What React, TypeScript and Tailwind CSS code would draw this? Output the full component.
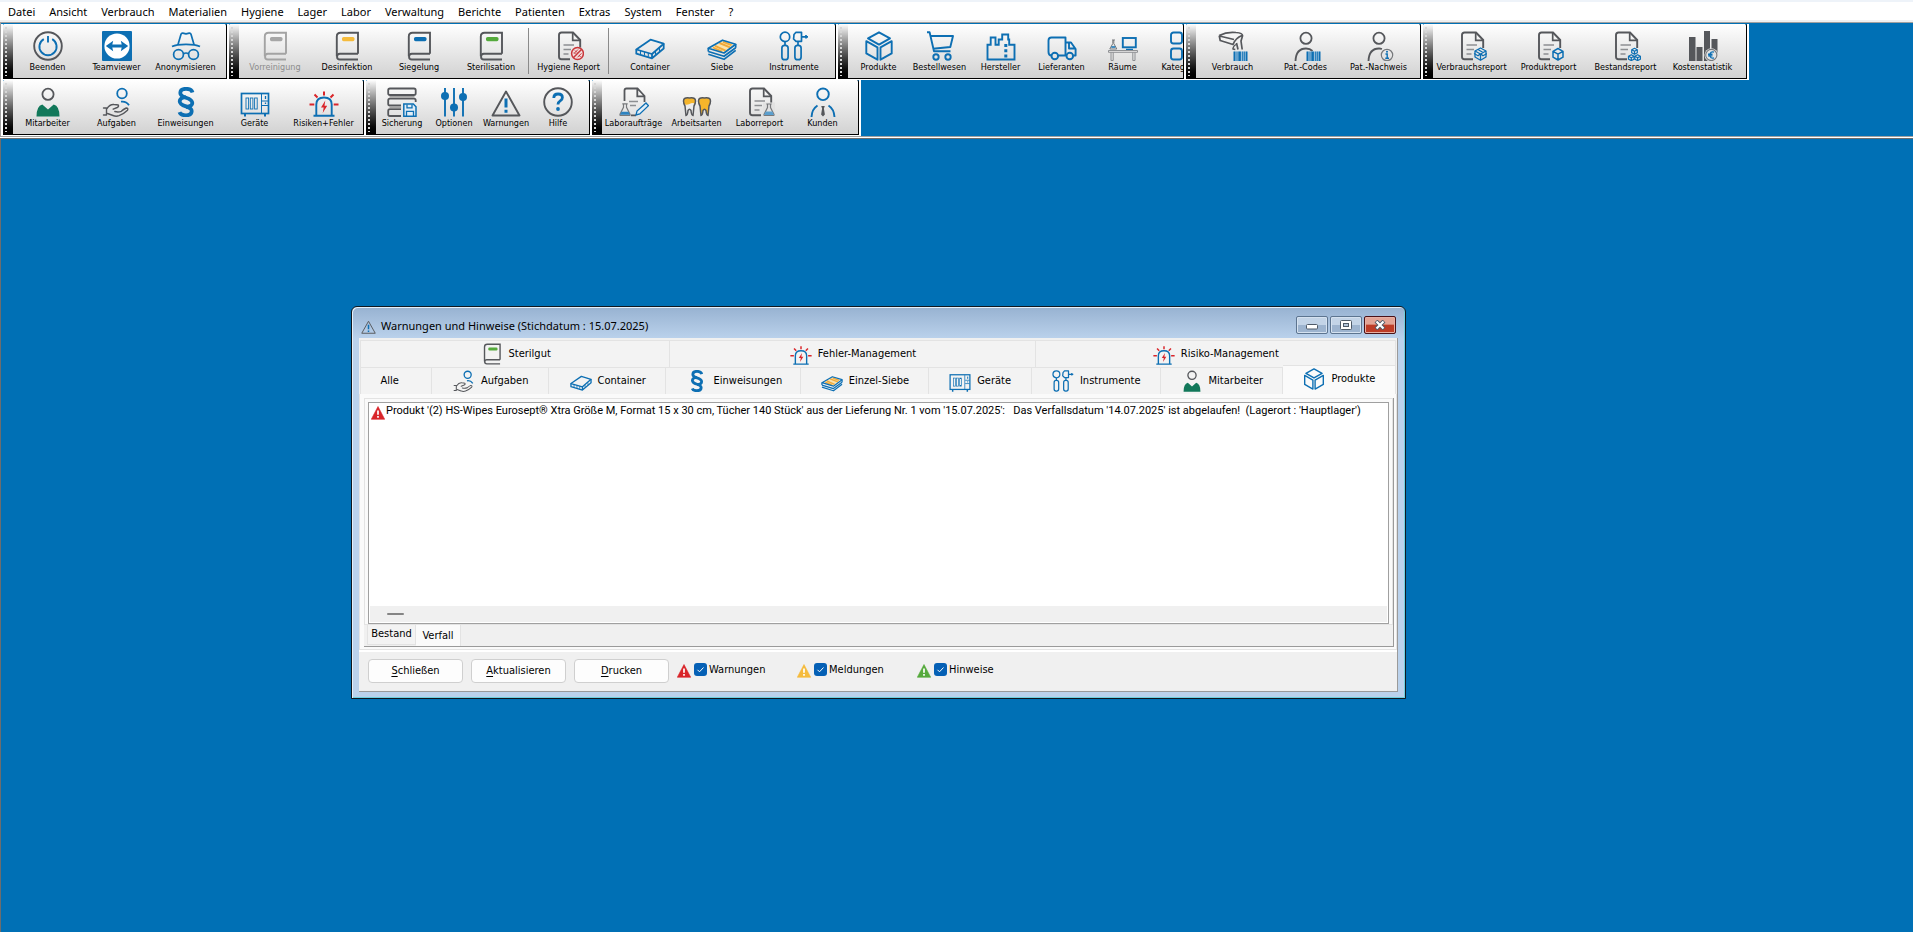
import React from "react";

const B = "#0d6fb3";
const D = "#55575b";

type IconProps = { className?: string };
type IconType = (p: IconProps) => React.ReactElement;

function Svg({ className = "size-[30px]", children }: { className?: string; children: React.ReactNode }) {
  return (
    <svg viewBox="0 0 30 30" fill="none" className={`${className} shrink-0`} aria-hidden="true">
      {children}
    </svg>
  );
}

const Power: IconType = (p) => (
  <Svg {...p}>
    <circle cx="15" cy="15" r="13.8" stroke={D} strokeWidth="1.9" />
    <path d="M10.800 8.200a8.600 8.600 0 1 0 8.400 0" stroke={B} strokeWidth="1.900" />
    <path d="M15 5v6.500" stroke={B} strokeWidth="1.900" />
  </Svg>
);

const TeamViewer: IconType = (p) => (
  <Svg {...p}>
    <rect width="30" height="30" rx="1" fill={B} />
    <circle cx="15" cy="15" r="12.600" fill="#fff" />
    <path d="M3.800 15l7.400-5.200-.9 3.600h9.400l-.9-3.600 7.400 5.200-7.400 5.200.9-3.600h-9.400l.9 3.600z" fill={B} />
  </Svg>
);

const Incognito: IconType = (p) => (
  <Svg {...p}>
    <g stroke={B} strokeWidth="1.700" strokeLinejoin="round">
      <path d="M7 13.500l3-10.200q.4-1.300 1.800-1.100l3.200.6 3.200-.6q1.400-.2 1.800 1.100l3 10.200" />
      <path d="M1 15.600q4.500-2.200 14-2.200t14 2.200" />
      <circle cx="7.500" cy="23.500" r="4.900" />
      <circle cx="22.500" cy="23.500" r="4.900" />
      <path d="M12.400 22.800q2.600-1.600 5.200 0" />
    </g>
  </Svg>
);

function bookIcon(fill: string, stroke: string): IconType {
  return (p) => (
    <Svg {...p}>
      <path d="M26 22.800V1.700H8.600Q4.800 1.700 4.800 5.400V25.200" stroke={stroke} strokeWidth="1.900" />
      <path d="M26 22.800H7.900a2.800 2.800 0 0 0 0 5.700H26" stroke={stroke} strokeWidth="1.900" />
      <rect x="10" y="6" width="12.500" height="4.200" rx="1.600" fill={fill} />
    </Svg>
  );
}
const BookGrey = bookIcon("#a6a6a6", "#a3a3a3");
const BookYellow = bookIcon("#f5bb3c", D);
const BookBlue = bookIcon(B, D);
const BookGreen = bookIcon("#55aa3c", D);

function Sheet() {
  return (
    <>
      <path d="M16 28.300H7.500Q5 28.300 5 25.800V4Q5 1.500 7.500 1.500H19L26.200 9V17" stroke={D} strokeWidth="1.900" />
      <path d="M18.700 2V9.300H26" stroke={D} strokeWidth="1.700" />
      <path d="M9.500 14h10.500M9.500 18.500h7.500M9.500 23h5" stroke="#8d8f92" strokeWidth="1.300" />
    </>
  );
}

const HygieneReport: IconType = (p) => (
  <Svg {...p}>
    <Sheet />
    <circle cx="23.500" cy="22.500" r="6.800" fill="#f3dede" />
    <circle cx="23.500" cy="22.500" r="5.900" stroke="#c8373b" strokeWidth="1.500" />
    <path d="M19.300 26.700l8.400-8.400" stroke="#c8373b" strokeWidth="1.500" />
    <path d="M20 22.500l4-4M23.500 26.300l4-4M21 19.500l2 2M25 24l1.500 2M20 21.500l1.500 1.500" stroke="#c8373b" strokeWidth="1" />
  </Svg>
);

const Container: IconType = (p) => (
  <Svg {...p}>
    <g stroke={B} strokeWidth="1.800" strokeLinejoin="round">
      <path d="M1.300 18.500L15.500 8.700l13.200 4L17 23z" />
      <path d="M1.300 18.500v4.200L17 27.300 28.700 17.500v-4.800M17 23v4.300" />
      <path d="M5.500 20v3.500M9.500 21v3.500M13.300 22v3.700M20.500 20.200v3.500M24.500 17v3.500" strokeWidth="1.100" />
    </g>
  </Svg>
);

const Siebe: IconType = (p) => (
  <Svg {...p}>
    <path d="M4.500 16.800L15.600 10l11 3.500L16.500 21.300z" fill="#fbe3ad" />
    <path d="M8 14.800l10.500 4.800M12.500 12l10.500 4.300M6 16.500l9 4M16 10.800l8.500 3.400" stroke="#f0a93a" strokeWidth="1.900" />
    <g stroke={B} strokeWidth="1.700" strokeLinejoin="round">
      <path d="M1.300 17.300L15.500 9.200l13.200 4L17 22z" />
      <path d="M1.300 20.500L17 25.300l11.700-8.600M1.300 23.300L17 28.300l11.700-9M1.300 17.300v3.200M28.700 13.200v3.500" />
    </g>
  </Svg>
);

const Instruments: IconType = (p) => (
  <Svg {...p}>
    <g stroke={B} strokeWidth="1.700" strokeLinejoin="round">
      <circle cx="6" cy="5.900" r="4.700" />
      <path d="M6 10.600v4M19 10.600v4" />
      <rect x="2.900" y="14.300" width="6.200" height="14.400" rx="2.800" />
      <rect x="15.900" y="14.300" width="6.200" height="14.400" rx="2.800" />
      <path d="M15 3.500L17 1.300h5.500v9H17L14.600 8z" />
      <path d="M22.500 5.800H29M27 4v3.500" />
    </g>
  </Svg>
);

const Cube: IconType = (p) => (
  <Svg {...p}>
    <g stroke={B} strokeWidth="1.900" strokeLinejoin="round">
      <path d="M15 1.300L26 7.400 15 13.600 4 7.400z" />
      <path d="M2.300 10.200L13.500 16.400v12.300L2.300 22.400z" />
      <path d="M27.700 10.200L16.500 16.400v12.300l11.200-6.300z" />
    </g>
  </Svg>
);

const Cart: IconType = (p) => (
  <Svg {...p}>
    <g stroke={B} strokeWidth="1.900" strokeLinejoin="round">
      <path d="M2 1.300h2.600L9 20.300h16.500M5.500 5H28l-2.700 11L8 17.800" />
      <circle cx="11" cy="26" r="2.700" />
      <circle cx="23" cy="26" r="2.700" />
    </g>
  </Svg>
);

const Factory: IconType = (p) => (
  <Svg {...p}>
    <path d="M1.500 28.500V13.700h3.200V6.500h4.800v7.200h3.200V8.500h3.500V3.500h6v5h1v5.200h5.300v14.800z" stroke={B} strokeWidth="1.900" />
    <path d="M19.800 13v3M19.800 18.300v3M19.800 23.500v3" stroke={B} strokeWidth="3" />
  </Svg>
);

const Truck: IconType = (p) => (
  <Svg {...p}>
    <g stroke={B} strokeWidth="1.900" strokeLinejoin="round">
      <path d="M4.500 24.500Q1.500 24.500 1.500 21V9.500Q1.500 6.500 4.500 6.500h14v18H11" />
      <path d="M18.500 11.500h5.500l4.600 6.500v6.500h-2.200M22 12v5.500h6.500" />
      <circle cx="7.800" cy="25" r="3.300" />
      <circle cx="22.800" cy="25" r="3.300" />
    </g>
  </Svg>
);

const Room: IconType = (p) => (
  <Svg {...p}>
    <rect x="14.800" y="7" width="13" height="9.300" stroke={B} strokeWidth="1.900" />
    <path d="M18 18.300h7" stroke={B} strokeWidth="1.200" />
    <path d="M.5 19.500h29v1.800H.5zM3 21.500v8h2.200v-8M24.800 21.500v8H27v-8" stroke="#85878a" strokeWidth=".9" />
    <path d="M4.800 9.500v3L1.800 18h7l-3-5.500v-3zM4 9h3" stroke="#77797c" strokeWidth="1" />
    <path d="M3.300 16h4" stroke={B} strokeWidth="1.500" />
  </Svg>
);

const Categories: IconType = (p) => (
  <Svg {...p}>
    <g stroke={B} strokeWidth="1.900">
      <rect x="2" y="1.500" width="11" height="11" rx="2.500" />
      <rect x="2" y="17.500" width="11" height="11" rx="2.500" />
      <rect x="18" y="1.500" width="11" height="11" rx="2.500" />
      <rect x="18" y="17.500" width="11" height="11" rx="2.500" />
    </g>
  </Svg>
);

function Barcode() {
  return (
    <g fill={B}>
      <rect x="16" y="20.500" width="13" height="9.500" fill="#b9d3e6" />
      <rect x="15.500" y="20.500" width="2" height="9.500" />
      <rect x="18.500" y="20.500" width="1" height="9.500" />
      <rect x="20.300" y="20.500" width="2.600" height="9.500" />
      <rect x="23.800" y="20.500" width="1" height="9.500" />
      <rect x="25.600" y="20.500" width="1.200" height="9.500" />
      <rect x="27.600" y="20.500" width="1.900" height="9.500" />
    </g>
  );
}

const Scanner: IconType = (p) => (
  <Svg {...p}>
    <g stroke={D} strokeWidth="1.700" strokeLinejoin="round">
      <path d="M1.200 4.500Q9 .5 18 1.500q7 .5 6.500 3.500l-1.500 5 1.200 8.500M1.200 4.500l1 5L15 13.500q2.500-6.500 9-9M1.500 5L16 8.500M18.500 12l1.500 6.500" />
      <path d="M18 13.500q-2.500 1-3.200 4.500l2.500.5" strokeWidth="1.300" />
    </g>
    <Barcode />
  </Svg>
);

const PatCodes: IconType = (p) => (
  <Svg {...p}>
    <circle cx="15" cy="7.300" r="5.600" stroke={D} strokeWidth="1.800" />
    <path d="M4.500 30Q5 17.500 15 17.500q4 0 6.500 2.500" stroke={D} strokeWidth="1.800" />
    <Barcode />
  </Svg>
);

const PatNachweis: IconType = (p) => (
  <Svg {...p}>
    <circle cx="15" cy="7.300" r="5.600" stroke={D} strokeWidth="1.800" />
    <path d="M4.500 30Q5 17.500 15 17.500q1.500 0 3 .5" stroke={D} strokeWidth="1.800" />
    <circle cx="23" cy="24" r="5.700" stroke="#77797c" strokeWidth="1.200" />
    <path d="M21.500 23H23.200v4M21.300 27.200h3.700" stroke={B} strokeWidth="1.400" />
    <circle cx="23" cy="20.700" r="1" fill={B} />
  </Svg>
);

const ConsumptionReport: IconType = (p) => (
  <Svg {...p}>
    <Sheet />
    <g stroke={B} strokeWidth="1.300" strokeLinejoin="round">
      <path d="M23.500 17l5.500 3v6l-5.500 3.300-5.500-3.300v-6z" />
      <path d="M18 20l5.500 3 5.500-3M23.500 23v6M17 22.500l4 2.300 2.500-2 2.500 2 4-2.300M21 18.500l5 3" />
    </g>
  </Svg>
);

const ProductReport: IconType = (p) => (
  <Svg {...p}>
    <Sheet />
    <path d="M24 17.500l5 2.800v5.900L24 29l-5-2.800v-5.900zM19 20.300l5 2.800 5-2.800M24 23.100V29" stroke={B} strokeWidth="1.500" strokeLinejoin="round" />
  </Svg>
);

const StockReport: IconType = (p) => (
  <Svg {...p}>
    <Sheet />
    <g stroke={B} strokeWidth="1.200" strokeLinejoin="round">
      <path d="M23.500 17.300l2.800 1.500v3l-2.800 1.500-2.800-1.500v-3zM20.700 18.800l2.800 1.500 2.800-1.500M23.500 20.300v3" />
      <path d="M20.300 23.700l2.800 1.500v3l-2.800 1.400-2.800-1.400v-3zM17.500 25.200l2.800 1.500 2.800-1.500M20.300 26.700v3" />
      <path d="M26.600 23.700l2.800 1.500v3l-2.800 1.400-2.800-1.400v-3zM23.800 25.200l2.800 1.500 2.800-1.500M26.600 26.700v3" />
    </g>
  </Svg>
);

const CostStats: IconType = (p) => (
  <Svg {...p}>
    <path d="M1 6h6.500v24H1zM8.500 16h6v14h-6zM16 0h6v30h-6zM23.500 8H29.500v16h-6z" fill={D} />
    <circle cx="23.300" cy="24" r="6.800" fill="#e4e4e4" />
    <circle cx="23.300" cy="24" r="5.600" stroke="#77797c" strokeWidth="1.100" />
    <path d="M26 21.200q-3.600-1.300-4.200 2.800.6 4.100 4.200 2.800M20 23.300h4.500M20 24.900h4.500" stroke={B} strokeWidth="1.400" />
  </Svg>
);

const Person: IconType = (p) => (
  <Svg {...p}>
    <circle cx="15" cy="7.300" r="5.600" stroke={D} strokeWidth="1.800" />
    <path d="M3.500 29.500Q3.500 19 9.300 17.500L15 22.500l5.700-5Q26.500 19 26.500 29.500z" fill="#12785a" />
  </Svg>
);

const Tasks: IconType = (p) => (
  <Svg {...p}>
    <circle cx="20" cy="6.500" r="4.800" stroke={B} strokeWidth="1.800" />
    <path d="M19 14.700q5-.8 8 3.600" stroke={B} strokeWidth="1.800" />
    <g stroke={D} strokeWidth="1.400" strokeLinejoin="round" strokeLinecap="round">
      <path d="M1.500 21h3v7h-3M5 21.500q3-4.500 7-4 3 .3 4.200.5 1 1.500-1 2.500l-4 1.700" />
      <path d="M5.500 26.500l5.500 2q3 1.300 6 .2 5-2 8.500-5.500 1-2-1.200-2.200-3 1.500-5 3.300-3 1.200-6.500.2" />
    </g>
  </Svg>
);

const Paragraph: IconType = (p) => (
  <Svg {...p}>
    <g stroke={B} strokeWidth="3.800">
      <path d="M21.500 5.500Q20.500 1.800 15 1.800 9.300 1.800 9.300 6q0 3 5.700 4.700 6.300 2 6.300 5.300 0 3.300-6.300 4" />
      <path d="M8.500 25.200Q9.500 28.300 15 28.300q5.700 0 5.700-4.300 0-2.800-5.700-4.600-6.300-2-6.300-5.200 0-3.200 6.300-4" />
    </g>
  </Svg>
);

const Device: IconType = (p) => (
  <Svg {...p}>
    <g stroke={B}>
      <rect x="1.500" y="6.500" width="27" height="20" strokeWidth="1.700" />
      <path d="M5 27v2.500M25 27v2.500" strokeWidth="2" />
      <path d="M21.500 7v19M22 14h6M22 18.500h6" strokeWidth="1" />
      <rect x="6" y="11" width="2.600" height="11" strokeWidth=".9" />
      <rect x="10.300" y="11" width="2.600" height="11" strokeWidth=".9" />
      <rect x="14.600" y="11" width="2.600" height="11" strokeWidth=".9" />
      <path d="M25.500 9v3M25.500 15.500v1.500" strokeWidth="1.300" />
    </g>
  </Svg>
);

const Alarm: IconType = (p) => (
  <Svg {...p}>
    <path d="M7.300 28V17.500Q7.300 10.500 15 10.500t7.700 7V28M4.500 28.800h21" stroke={B} strokeWidth="1.900" />
    <path d="M16.300 13.500l-4.300 7h2.700l-1 5.500 4.500-7.300h-2.700z" fill="#d9252a" />
    <path d="M15 4.500v4M5.500 7.500l3 3M24.500 7.500l-3 3M.5 17.500h4.800M24.700 17.500h4.800" stroke="#d9252a" strokeWidth="2" />
  </Svg>
);

const Backup: IconType = (p) => (
  <Svg {...p}>
    <g stroke={D} strokeWidth="1.800">
      <rect x="1.200" y="1.500" width="27.500" height="6.500" rx="1.800" />
      <path d="M14 18.500H3Q1.200 18.500 1.200 16.700V13.500Q1.200 11.700 3 11.700H27q1.700 0 1.700 1.800V15" />
      <path d="M14 29H3Q1.200 29 1.200 27.200V24Q1.200 22.200 3 22.200h11" />
    </g>
    <path d="M2.500 9.800h25M2.500 20.300h11.500" stroke="#a3a3a3" strokeWidth="1.700" />
    <path d="M16.800 17h9.500l2.700 2.700v9.500H16.800z" fill="#e2eef7" stroke={B} strokeWidth="1.500" />
    <path d="M20 17.500v3.300h5v-3.300M19.500 29v-4.700h7V29" stroke={B} strokeWidth="1.300" />
  </Svg>
);

const Sliders: IconType = (p) => (
  <Svg {...p}>
    <path d="M6 1v28.500M15 1v28.500M24 1v28.500" stroke={B} strokeWidth="1.900" />
    <g fill={B}>
      <circle cx="6" cy="9" r="4" />
      <circle cx="15" cy="20.500" r="4" />
      <circle cx="24" cy="10" r="4" />
    </g>
  </Svg>
);

const WarnOutline: IconType = (p) => (
  <Svg {...p}>
    <path d="M15 4.500L28.500 28.500h-27z" stroke={D} strokeWidth="1.900" strokeLinejoin="round" />
    <path d="M15 11.500v9M15 22.800v3" stroke={B} strokeWidth="3" />
  </Svg>
);

const Help: IconType = (p) => (
  <Svg {...p}>
    <circle cx="15" cy="15" r="13.800" stroke={D} strokeWidth="1.900" />
    <path d="M10.800 11q0-4 4.300-4 4.300 0 4.300 3.500 0 2-2.200 3.400-2.200 1.400-2.200 3.600" stroke={B} strokeWidth="2.800" />
    <circle cx="15" cy="22" r="1.900" fill={B} />
  </Svg>
);

const flask = "M-1.500-6v3.500L-5 4.500Q-5.300 5.500-4.300 5.500H4.300Q5.300 5.500 5 4.500L1.500-2.500V-6M-2.700-6h5.400";

const LabOrder: IconType = (p) => (
  <Svg {...p}>
    <path d="M5.500 14V3.500Q5.500 1.500 7.500 1.500H18.500L25.500 9v6M18.300 2v7.300h7M12 28.300h5" stroke={D} strokeWidth="1.800" />
    <path d="M10 14.500h9M11 18.500h6" stroke="#8d8f92" strokeWidth="1.300" />
    <g transform="translate(6 22.800)">
      <path d={flask} stroke="#77797c" strokeWidth="1.200" />
      <path d="M-3.500 2h7L5 5H-5z" fill="#2d83c0" />
    </g>
    <path d="M17 28l1-4L27 16l2.500 2.700-8.700 8.300z" fill="#e2eef7" stroke={B} strokeWidth="1.300" />
  </Svg>
);

const LabReport: IconType = (p) => (
  <Svg {...p}>
    <Sheet />
    <rect x="18" y="15.500" width="12" height="14" fill="#e2e2e2" />
    <g transform="translate(24 23)">
      <path d={flask} stroke="#77797c" strokeWidth="1.200" />
      <path d="M-3.300 1.500h6.600L5 5H-5z" fill="#5b9fce" />
    </g>
  </Svg>
);

const Teeth: IconType = (p) => {
  const tooth = "M1.500 14q0-4 6-3 6-1 6 3 0 2.500-1.500 5L11 28.500q-1.500 0-2-5-1.500-2.500-3 0-.5 5-2 5L3 19Q1.500 16.500 1.500 14z";
  return (
    <Svg {...p}>
      <path d={tooth} fill="#ececec" />
      <path d="M1.500 17v-3q0-4 6-3 6-1 6 3v3q-3-2-6 0-3 1.500-6 0z" fill="#f5b52b" />
      <path d={tooth} stroke={D} strokeWidth="1.500" />
      <g transform="translate(15 0)">
        <path d={tooth} fill="#f5b52b" stroke={D} strokeWidth="1.500" />
      </g>
    </Svg>
  );
};

const Customer: IconType = (p) => (
  <Svg {...p}>
    <circle cx="15" cy="7.300" r="5.800" stroke={B} strokeWidth="1.900" />
    <path d="M3.500 30q.5-8 6-11.500M26.500 30q-.5-8-6-11.500" stroke={B} strokeWidth="1.900" />
    <path d="M13.200 19h3.600l-.9 2.500 1 6L15 29.500l-1.900-2 1-6z" fill={D} />
  </Svg>
);

function AlertTriangle({ className }: { className: string }) {
  return (
    <svg viewBox="0 0 14 14" className={`size-[14px] shrink-0 ${className}`} aria-hidden="true">
      <path d="M7 .5L13.700 13.300H.3z" fill="currentColor" stroke="currentColor" strokeWidth=".6" strokeLinejoin="round" />
      <path d="M7 4.500v4.300M7 10v1.800" stroke="#fff" strokeWidth="1.700" />
    </svg>
  );
}

type Tool = { label: string; icon: IconType; off?: boolean };

function ToolButton({ label, icon: Icon, off, width }: Tool & { width: string }) {
  return (
    <button
      type="button"
      disabled={off}
      className={`flex shrink-0 flex-col items-center pt-[7px] ${width} ${off ? "text-[#8c8c8c]" : "text-black"}`}
    >
      <Icon />
      <span className="text-[9px] leading-[13px] whitespace-nowrap">{label}</span>
    </button>
  );
}

function Divider() {
  return <div className="my-1 w-px shrink-0 bg-[#8a8a8a]" />;
}

function Toolbar({ name, className = "pr-[5px]", children }: { name: string; className?: string; children: React.ReactNode }) {
  return (
    <div className="shrink-0 border-r-2 border-b border-white">
      <div
        role="toolbar"
        aria-label={name}
        className={`flex h-[55px] overflow-hidden rounded-t-xs border-r border-b border-black bg-linear-to-b from-white to-[#d2d2d2] ${className}`}
      >
        <div className="flex w-[10px] shrink-0 bg-linear-to-b from-white to-black pt-[3px] pb-[2px] pl-[2px]">
          <div className="w-[2px] bg-[repeating-linear-gradient(to_bottom,#d6d6d6_0_2px,transparent_2px_4px)]" />
        </div>
        {children}
      </div>
    </div>
  );
}

function Tools({ items, width }: { items: Tool[]; width: string }) {
  return (
    <>
      {items.map((t) => (
        <ToolButton key={t.label} {...t} width={width} />
      ))}
    </>
  );
}

const menu = [
  "Datei", "Ansicht", "Verbrauch", "Materialien", "Hygiene", "Lager", "Labor", "Verwaltung",
  "Berichte", "Patienten", "Extras", "System", "Fenster", "?",
];

const upperTabs = [
  { label: "Sterilgut", icon: BookGreen, width: "basis-[309px]" },
  { label: "Fehler-Management", icon: Alarm, width: "basis-[365px]" },
  { label: "Risiko-Management", icon: Alarm, width: "basis-[360px]" },
];

const lowerTabs: { label: string; icon?: IconType; width: string }[] = [
  { label: "Alle", width: "basis-[71px] pr-[14px]" },
  { label: "Aufgaben", icon: Tasks, width: "basis-[117px]" },
  { label: "Container", icon: Container, width: "basis-[117px]" },
  { label: "Einweisungen", icon: Paragraph, width: "basis-[135px]" },
  { label: "Einzel-Siebe", icon: Siebe, width: "basis-[127px]" },
  { label: "Geräte", icon: Device, width: "basis-[103px]" },
  { label: "Instrumente", icon: Instruments, width: "basis-[129px]" },
  { label: "Mitarbeiter", icon: Person, width: "basis-[122px]" },
  { label: "Produkte", icon: Cube, width: "basis-[113px]" },
];

const filters = [
  { id: "warnungen", label: "Warnungen", color: "text-[#d9252a]" },
  { id: "meldungen", label: "Meldungen", color: "text-[#f5bb3c]" },
  { id: "hinweise", label: "Hinweise", color: "text-[#55aa3c]" },
];

function CommandButton({ letter, rest }: { letter: string; rest: string }) {
  return (
    <button
      type="button"
      className="h-6 w-[95px] rounded-[4px] border border-[#cfcfcf] bg-[#fdfdfd] text-[11px] leading-[20px]"
    >
      <u className="underline-offset-2">{letter}</u>
      {rest}
    </button>
  );
}

const captionButton =
  "flex h-[18px] w-8 items-center justify-center rounded-[2px] border border-[#5d7590] bg-linear-to-b from-[#c3d4e7] from-50% to-[#9db4cf] to-50% shadow-[inset_0_0_0_1px_#d5e2f0]";

function WarningsWindow() {
  return (
    <section
      aria-label="Warnungen und Hinweise"
      className="absolute top-[167px] left-[350px] flex w-[1055px] flex-col rounded-t-[6px] border border-[#101820] bg-linear-to-b from-[#97b2d1] to-[#bbd2ec] to-[32px] px-[7px] pb-[6px] shadow-[inset_1px_1px_0_#e6f0fa,inset_-1px_-1px_0_#6fd0e0]"
    >
      <header className="flex h-[31px] items-center pt-[7px] pl-[2px]">
        <WarnOutline className="size-[15px]" />
        <h1 className="flex-1 pl-[5px] text-[11px] leading-4 font-normal font-['Noto_Sans','Open_Sans',sans-serif]">
          Warnungen und Hinweise (Stichdatum : 15.07.2025)
        </h1>
        <div className="flex gap-[2px] pr-[2px] pb-[3px]">
          <button type="button" aria-label="Minimieren" className={captionButton}>
            <svg viewBox="0 0 12 6" className="mt-1 h-[6px] w-3">
              <rect x=".5" y=".5" width="11" height="4.500" rx="1" fill="#fff" stroke="#4e5a68" />
            </svg>
          </button>
          <button type="button" aria-label="Maximieren" className={captionButton}>
            <svg viewBox="0 0 12 10" className="h-[10px] w-3">
              <rect x=".5" y=".5" width="11" height="9" rx="1" fill="#fff" stroke="#4e5a68" />
              <rect x="3.500" y="3.500" width="5" height="3" fill="#b4c6da" stroke="#4e5a68" />
            </svg>
          </button>
          <button
            type="button"
            aria-label="Fenster schließen"
            className="flex h-[18px] w-8 items-center justify-center rounded-[2px] border border-[#4a1218] bg-linear-to-b from-[#e3a496] from-45% to-[#bd3c27] to-50% shadow-[inset_0_0_0_1px_#e8b0a4]"
          >
            <svg viewBox="0 0 12 10" className="h-[10px] w-3">
              <path d="M2 1l8 8M10 1L2 9" stroke="#4e5a68" strokeWidth="4" />
              <path d="M2.500 1.500l7 7M9.500 1.500l-7 7" stroke="#fff" strokeWidth="2.200" />
            </svg>
          </button>
        </div>
      </header>

      <div className="border-r border-b border-[#9a9a9a] bg-[#f0f0f0] text-[11px]">
        <div className="border-b-2 border-white">
          <div className="px-[1px] pt-[2px]">
            <div role="tablist" aria-label="Management" className="flex h-[27px] border-t border-l border-[#e3e3e3] bg-[#f3f3f3]">
              {upperTabs.map(({ label, icon: Icon, width }) => (
                <button
                  key={label}
                  type="button"
                  role="tab"
                  aria-selected={false}
                  className={`flex grow items-center justify-center gap-[6px] border-r border-[#e3e3e3] pl-px ${width}`}
                >
                  <Icon className="size-[22px]" />
                  {label}
                </button>
              ))}
            </div>
            <div role="tablist" aria-label="Bereich" className="flex h-[27px] border-t border-l border-[#e3e3e3] bg-[#f3f3f3]">
              {lowerTabs.map(({ label, icon: Icon, width }) => {
                const active = label === "Produkte";
                return (
                  <button
                    key={label}
                    type="button"
                    role="tab"
                    aria-selected={active}
                    className={`flex grow items-center justify-center gap-[6px] border-[#e3e3e3] pl-px ${width} ${
                      active ? "-mt-[3px] border-t border-r bg-[#fafafa] pb-[2px]" : "border-r"
                    }`}
                  >
                    {Icon && <Icon className="size-[22px]" />}
                    {label}
                  </button>
                );
              })}
            </div>
          </div>

          <div className="border border-t-0 border-[#e3e3e3] bg-[#fafafa] pt-[4px] pr-[2px] pb-[2px] pl-[4px]">
            <div className="border-r border-b border-[#9a9a9a] bg-[#f0f0f0]">
              <div className="border border-[#e3e3e3] bg-[#fafafa] px-[3px] pt-[3px]">
                <div className="border border-[#a0a0a0] bg-white px-px pb-px">
                  <ul className="h-[203px]">
                    <li className="flex items-start pl-px">
                      <AlertTriangle className="mt-[3px] text-[#d9252a]" />
                      <span className="pl-px leading-4 whitespace-pre font-[Roboto,'DejaVu_Sans_Condensed',sans-serif]">
                        {"Produkt '(2) HS-Wipes Eurosept® Xtra Größe M, Format 15 x 30 cm, Tücher 140 Stück' aus der Lieferung Nr. 1 vom '15.07.2025':   Das Verfallsdatum '14.07.2025' ist abgelaufen!  (Lagerort : 'Hauptlager')"}
                      </span>
                    </li>
                  </ul>
                  <div className="flex h-[16px] items-center bg-[#f0f0f0] pl-[17px]">
                    <div className="h-[2px] w-[17px] rounded-full bg-[#858585]" />
                  </div>
                </div>
              </div>
              <div role="tablist" aria-label="Produkte" className="flex h-[21px] items-start pl-[3px]">
                <button type="button" role="tab" aria-selected={false} className="h-5 w-[49px] border border-t-0 border-[#e3e3e3] bg-[#f3f3f3]">
                  Bestand
                </button>
                <button type="button" role="tab" aria-selected={true} className="h-[21px] w-[45px] border-r border-[#e3e3e3] bg-[#fafafa] pt-[2px]">
                  Verfall
                </button>
              </div>
            </div>
          </div>
        </div>

        <div className="flex items-start gap-[8px] pt-[7px] pb-[8px] pl-[9px]">
          <CommandButton letter="S" rest="chließen" />
          <CommandButton letter="A" rest="ktualisieren" />
          <CommandButton letter="D" rest="rucken" />
          <div className="flex pt-[4px]">
            {filters.map((f) => (
              <div key={f.id} className="flex w-[120px] items-start">
                <AlertTriangle className={`mt-px ${f.color}`} />
                <div className="ml-[3px] grid">
                  <input
                    id={f.id}
                    type="checkbox"
                    defaultChecked
                    className="col-start-1 row-start-1 size-[13px] appearance-none rounded-[3px] bg-[#0560b5]"
                  />
                  <svg viewBox="0 0 13 13" fill="none" className="pointer-events-none col-start-1 row-start-1 size-[13px]">
                    <path d="M3.500 6.800l2 2 4-4.300" stroke="#fff" strokeWidth="1" />
                  </svg>
                </div>
                <label htmlFor={f.id} className="pl-[2px] leading-[14px]">
                  {f.label}
                </label>
              </div>
            ))}
          </div>
        </div>
      </div>
    </section>
  );
}

export default function App() {
  return (
    <div className="flex min-h-screen flex-col bg-[#0070b5] text-black font-['DejaVu_Sans_Condensed','DejaVu_Sans',sans-serif]">
      <nav aria-label="Hauptmenü" className="flex h-[22px] border-t-2 border-b-2 border-t-[#eef3f9] border-b-[#f0f0f0] bg-white pl-px font-['Noto_Sans','Open_Sans',sans-serif]">
        {menu.map((m) => (
          <button key={m} type="button" className="px-[7px] text-[11px] leading-[19px]">
            {m}
          </button>
        ))}
      </nav>

      <div className="border-t border-l border-[#a0a0a0] pt-px">
        <div className="border-l-2 border-white">
          <div className="flex">
            <Toolbar name="Programm" className="pr-[6px]">
              <Tools
                width="w-[69px]"
                items={[
                  { label: "Beenden", icon: Power },
                  { label: "Teamviewer", icon: TeamViewer },
                  { label: "Anonymisieren", icon: Incognito },
                ]}
              />
            </Toolbar>
            <Toolbar name="Hygiene">
              <Tools
                width="w-[72px]"
                items={[
                  { label: "Vorreinigung", icon: BookGrey, off: true },
                  { label: "Desinfektion", icon: BookYellow },
                  { label: "Siegelung", icon: BookBlue },
                  { label: "Sterilisation", icon: BookGreen },
                ]}
              />
              <div className="flex shrink-0 pr-[5px] pl-px">
                <Divider />
                <ToolButton label="Hygiene Report" icon={HygieneReport} width="w-[79px]" />
                <Divider />
              </div>
              <Tools
                width="w-[72px]"
                items={[
                  { label: "Container", icon: Container },
                  { label: "Siebe", icon: Siebe },
                  { label: "Instrumente", icon: Instruments },
                ]}
              />
            </Toolbar>
            <Toolbar name="Materialien" className="w-[346px]">
              <Tools
                width="w-[61px]"
                items={[
                  { label: "Produkte", icon: Cube },
                  { label: "Bestellwesen", icon: Cart },
                  { label: "Hersteller", icon: Factory },
                  { label: "Lieferanten", icon: Truck },
                  { label: "Räume", icon: Room },
                  { label: "Kategorien", icon: Categories },
                ]}
              />
            </Toolbar>
            <Toolbar name="Verbrauch">
              <Tools
                width="w-[73px]"
                items={[
                  { label: "Verbrauch", icon: Scanner },
                  { label: "Pat.-Codes", icon: PatCodes },
                  { label: "Pat.-Nachweis", icon: PatNachweis },
                ]}
              />
            </Toolbar>
            <Toolbar name="Berichte">
              <Tools
                width="w-[77px]"
                items={[
                  { label: "Verbrauchsreport", icon: ConsumptionReport },
                  { label: "Produktreport", icon: ProductReport },
                  { label: "Bestandsreport", icon: StockReport },
                  { label: "Kostenstatistik", icon: CostStats },
                ]}
              />
            </Toolbar>
          </div>
          <div className="flex">
            <Toolbar name="Verwaltung">
              <Tools
                width="w-[69px]"
                items={[
                  { label: "Mitarbeiter", icon: Person },
                  { label: "Aufgaben", icon: Tasks },
                  { label: "Einweisungen", icon: Paragraph },
                  { label: "Geräte", icon: Device },
                  { label: "Risiken+Fehler", icon: Alarm },
                ]}
              />
            </Toolbar>
            <Toolbar name="System">
              <Tools
                width="w-[52px]"
                items={[
                  { label: "Sicherung", icon: Backup },
                  { label: "Optionen", icon: Sliders },
                  { label: "Warnungen", icon: WarnOutline },
                  { label: "Hilfe", icon: Help },
                ]}
              />
            </Toolbar>
            <Toolbar name="Labor" className="pr-[4px]">
              <Tools
                width="w-[63px]"
                items={[
                  { label: "Laboraufträge", icon: LabOrder },
                  { label: "Arbeitsarten", icon: Teeth },
                  { label: "Laborreport", icon: LabReport },
                  { label: "Kunden", icon: Customer },
                ]}
              />
            </Toolbar>
          </div>
        </div>
      </div>

      <div className="h-px bg-[#a0a0a0]" />
      <div className="h-px bg-white" />
      <main className="relative grow border-t border-l border-[#6d6d6d]">
        <WarningsWindow />
      </main>
    </div>
  );
}
